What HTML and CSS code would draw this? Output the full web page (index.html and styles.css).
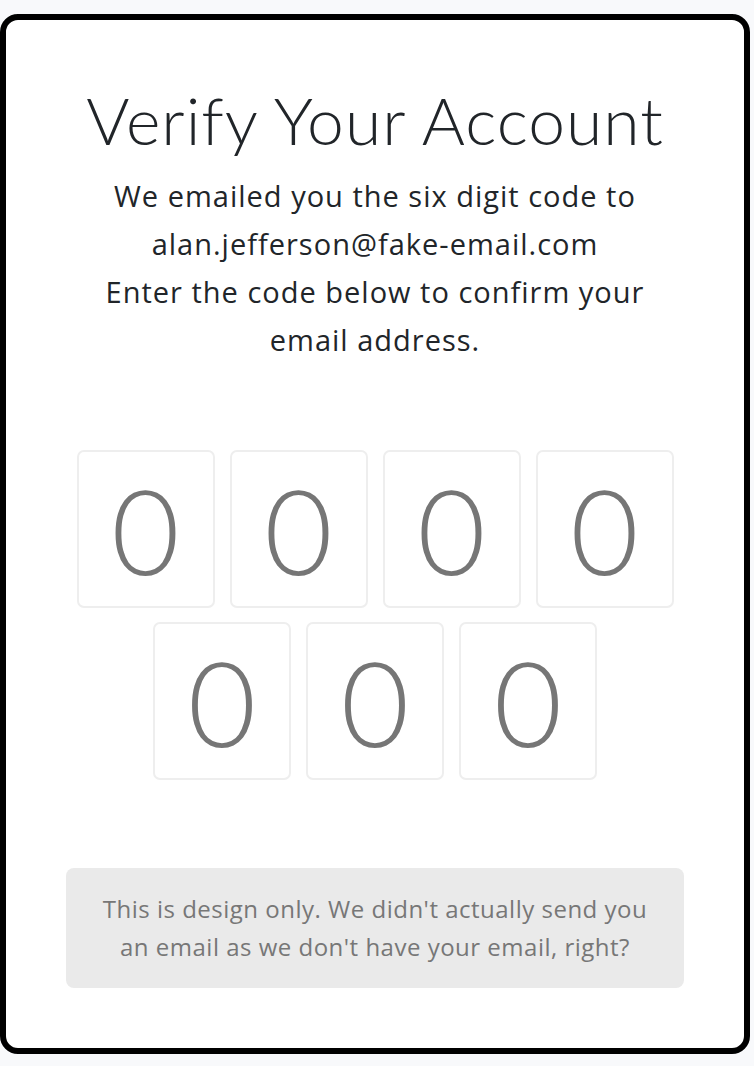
FILE: index.html
```html
<!DOCTYPE html>
<html lang="en">
<head>
<meta charset="utf-8">
<title>Verify Your Account</title>
<link rel="stylesheet" href="styles.css">
</head>
<body>
<main class="card">
  <h1 class="title">Verify Your Account</h1>
  <p class="lead">We emailed you the six digit code to<br>alan.jefferson@fake-email.com<br>Enter the code below to confirm your email address.</p>
  <form class="code">
    <input class="digit" type="text" maxlength="1" value="0">
    <input class="digit" type="text" maxlength="1" value="0">
    <input class="digit" type="text" maxlength="1" value="0">
    <input class="digit" type="text" maxlength="1" value="0">
    <input class="digit" type="text" maxlength="1" value="0">
    <input class="digit" type="text" maxlength="1" value="0">
    <input class="digit" type="text" maxlength="1" value="0">
  </form>
  <p class="note">This is design only. We didn't actually send you an email as we don't have your email, right?</p>
</main>
</body>
</html>
```
FILE: styles.css
```css
html, body {
  margin: 0;
  padding: 0;
  background: #f8f9fb;
}
body {
  font-family: "Open Sans", Lato, sans-serif;
  color: #212529;
  padding-top: 14px;
}
.card {
  box-sizing: border-box;
  width: 750px;
  height: 1040px;
  background: #fff;
  border: 6px solid #000;
  border-radius: 18px;
  display: flex;
  flex-direction: column;
  align-items: center;
  padding-top: 60px;
}
.title {
  margin: 0;
  font-family: Lato, "Open Sans", sans-serif;
  font-size: 66px;
  font-weight: 300;
  line-height: 80px;
  letter-spacing: 1px;
}
.lead {
  margin: 12px 0 0;
  width: 560px;
  text-align: center;
  font-size: 29px;
  line-height: 48px;
  letter-spacing: 1px;
}
.code {
  margin-top: 86px;
  width: 600px;
  display: flex;
  flex-wrap: wrap;
  justify-content: center;
  column-gap: 15px;
  row-gap: 14px;
}
.digit {
  box-sizing: border-box;
  width: 138px;
  height: 158px;
  margin: 0;
  padding: 0;
  border: 2px solid #eeeeee;
  border-radius: 7px;
  background: #fff;
  text-align: center;
  font-family: Lato, "Open Sans", sans-serif;
  font-size: 118px;
  font-weight: 300;
  color: #767676;
  outline: none;
}
.note {
  box-sizing: border-box;
  margin: 88px 0 0;
  width: 618px;
  padding: 22px 30px;
  background: #eaeaea;
  border-radius: 8px;
  text-align: center;
  color: #777;
  font-size: 24px;
  line-height: 38px;
  letter-spacing: 0.5px;
}
```
